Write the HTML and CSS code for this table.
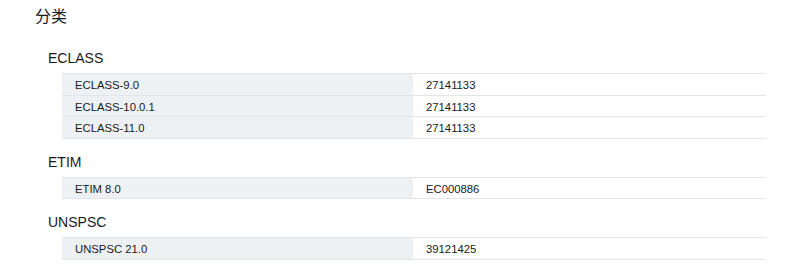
FILE: index.html
```html
<!DOCTYPE html>
<html lang="zh">
<head>
<meta charset="utf-8">
<title>分类</title>
<link rel="stylesheet" href="styles.css">
</head>
<body>
<div class="page">
  <h2 class="title">分类</h2>

  <section class="group">
    <h3 class="group-title">ECLASS</h3>
    <table class="cls-table">
      <tr><td class="label">ECLASS-9.0</td><td class="value">27141133</td></tr>
      <tr><td class="label">ECLASS-10.0.1</td><td class="value">27141133</td></tr>
      <tr><td class="label">ECLASS-11.0</td><td class="value">27141133</td></tr>
    </table>
  </section>

  <section class="group">
    <h3 class="group-title">ETIM</h3>
    <table class="cls-table">
      <tr><td class="label">ETIM 8.0</td><td class="value">EC000886</td></tr>
    </table>
  </section>

  <section class="group">
    <h3 class="group-title">UNSPSC</h3>
    <table class="cls-table">
      <tr><td class="label">UNSPSC 21.0</td><td class="value">39121425</td></tr>
    </table>
  </section>
</div>
</body>
</html>
```

FILE: styles.css
```css
html, body {
  margin: 0;
  padding: 0;
  background: #ffffff;
}

body {
  font-family: "Liberation Sans", Arial, "Noto Sans CJK SC", sans-serif;
  color: #1a1a1a;
}

.page {
  padding: 4px 24px 0 35px;
}

.title {
  margin: 0;
  font-family: "Noto Sans CJK SC", "Liberation Sans", sans-serif;
  font-size: 16px;
  font-weight: normal;
  line-height: 22px;
}

.group {
  margin: 24px 0 0 13px;
}

.group + .group {
  margin-top: 15px;
}

.group-title {
  margin: 0;
  font-size: 14px;
  font-weight: normal;
  line-height: 16px;
}

.cls-table {
  margin: 7px 0 0 14px;
  width: calc(100% - 14px);
  border-collapse: collapse;
  border-top: 1px solid #e2e5e9;
  font-size: 11.3px;
}

.cls-table td {
  height: 18.5px;
  padding: 2px 0 0 13px;
  line-height: 18.5px;
  border-bottom: 1px solid #e2e5e9;
  vertical-align: top;
}

.cls-table .label {
  width: 338px;
  background: #eef1f4;
}
```
